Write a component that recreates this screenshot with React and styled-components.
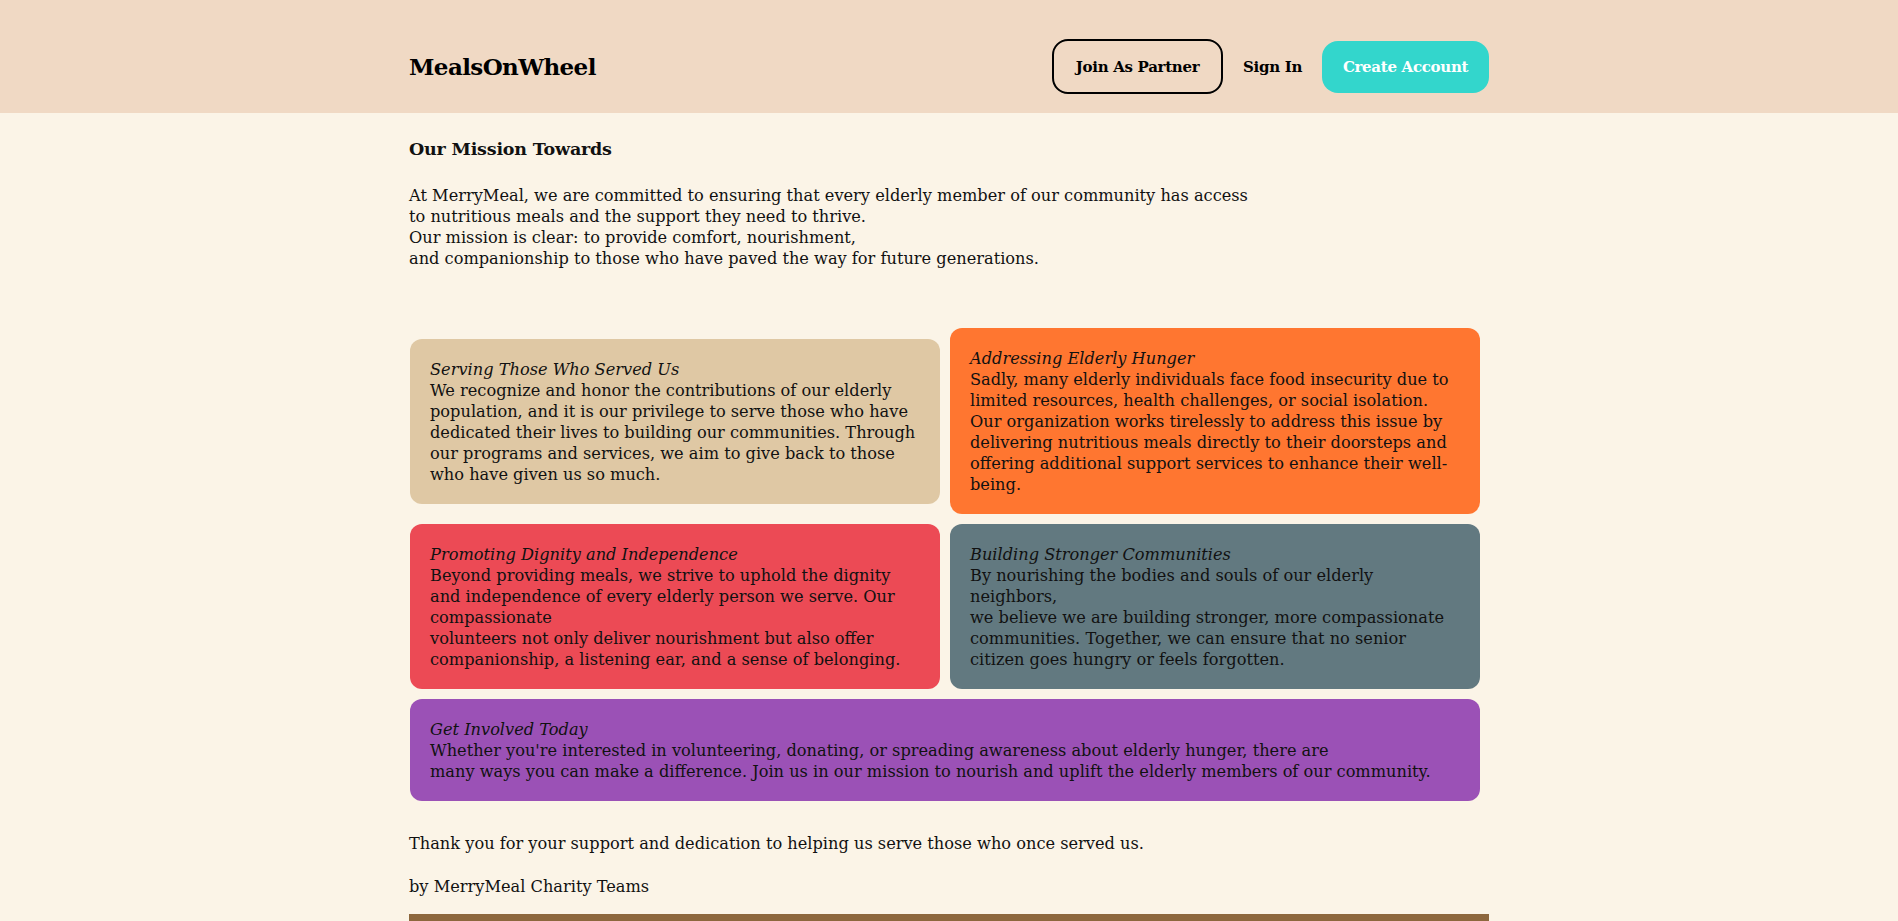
import React from 'react';
import styled, { createGlobalStyle } from 'styled-components';

const GlobalStyle = createGlobalStyle`
  html, body {
    margin: 0;
    padding: 0;
    background: #fbf4e7;
    color: #111111;
    font-family: "DejaVu Serif", "Liberation Serif", serif;
  }
  * { box-sizing: border-box; }
`;

const Header = styled.header`
  height: 113px;
  background: #f0d9c4;
  padding-top: 39px;
`;

const Bar = styled.div`
  max-width: 1080px;
  margin: 0 auto;
  display: flex;
  align-items: center;
  justify-content: space-between;
  height: 55px;
`;

const Logo = styled.div`
  font-size: 23px;
  font-weight: 700;
  letter-spacing: -0.6px;
  color: #000;
`;

const Nav = styled.nav`
  display: flex;
  align-items: center;
  gap: 20px;
`;

const NavButton = styled.button`
  font-family: inherit;
  font-size: 15px;
  font-weight: 700;
  letter-spacing: -0.3px;
  cursor: pointer;
  padding: 0;
  border-radius: 16px;
  border: ${p => (p.$outline ? '2px solid #000' : 'none')};
  background: ${p => (p.$primary ? '#33d6cc' : 'transparent')};
  color: ${p => (p.$primary ? '#ffffff' : '#000000')};
  height: ${p => (p.$outline ? '55px' : p.$primary ? '52px' : 'auto')};
  width: ${p => (p.$outline ? '171px' : p.$primary ? '167px' : 'auto')};
`;

const Main = styled.main`
  max-width: 1080px;
  margin: 0 auto;
  padding-top: 25px;
`;

const Title = styled.h2`
  margin: 0;
  font-size: 17.5px;
  line-height: 22px;
  font-weight: 700;
  letter-spacing: -0.2px;
`;

const Intro = styled.p`
  margin: 25px 0 0;
  font-size: 16.2px;
  line-height: 21px;
`;

const Grid = styled.section`
  margin: 59px 9px 0 1px;
  display: grid;
  grid-template-columns: 1fr 1fr;
  gap: 10px;
  align-items: center;
`;

const Card = styled.div`
  background: ${p => p.$bg};
  border-radius: 12px;
  padding: 20px 12px 19px 20px;
  font-size: 16.2px;
  line-height: 21px;
  white-space: nowrap;
  color: #111;
  grid-column: ${p => (p.$wide ? '1 / -1' : 'auto')};
  align-self: ${p => (p.$stretch ? 'stretch' : 'center')};
`;

const CardTitle = styled.em`
  display: block;
  font-style: italic;
`;

const Closing = styled.p`
  margin: ${p => p.$top} 0 0;
  font-size: 16.2px;
  line-height: 21px;
`;

const Footer = styled.footer`
  max-width: 1080px;
  margin: 17px auto 0;
  height: 40px;
  background: #8d673d;
`;

const cards = [
  {
    bg: '#dfc8a4',
    title: 'Serving Those Who Served Us',
    lines: [
      'We recognize and honor the contributions of our elderly',
      'population, and it is our privilege to serve those who have',
      'dedicated their lives to building our communities. Through',
      'our programs and services, we aim to give back to those',
      'who have given us so much.',
    ],
  },
  {
    bg: '#ff7630',
    title: 'Addressing Elderly Hunger',
    lines: [
      'Sadly, many elderly individuals face food insecurity due to',
      'limited resources, health challenges, or social isolation.',
      'Our organization works tirelessly to address this issue by',
      'delivering nutritious meals directly to their doorsteps and',
      'offering additional support services to enhance their well-',
      'being.',
    ],
  },
  {
    bg: '#ec4a55',
    stretch: true,
    title: 'Promoting Dignity and Independence',
    lines: [
      'Beyond providing meals, we strive to uphold the dignity',
      'and independence of every elderly person we serve. Our',
      'compassionate',
      'volunteers not only deliver nourishment but also offer',
      'companionship, a listening ear, and a sense of belonging.',
    ],
  },
  {
    bg: '#627980',
    stretch: true,
    title: 'Building Stronger Communities',
    lines: [
      'By nourishing the bodies and souls of our elderly',
      'neighbors,',
      'we believe we are building stronger, more compassionate',
      'communities. Together, we can ensure that no senior',
      'citizen goes hungry or feels forgotten.',
    ],
  },
  {
    bg: '#9b51b6',
    wide: true,
    title: 'Get Involved Today',
    lines: [
      "Whether you're interested in volunteering, donating, or spreading awareness about elderly hunger, there are",
      'many ways you can make a difference. Join us in our mission to nourish and uplift the elderly members of our community.',
    ],
  },
];

export default function App() {
  return (
    <>
      <GlobalStyle />
      <Header>
        <Bar>
          <Logo>MealsOnWheel</Logo>
          <Nav>
            <NavButton $outline>Join As Partner</NavButton>
            <NavButton>Sign In</NavButton>
            <NavButton $primary>Create Account</NavButton>
          </Nav>
        </Bar>
      </Header>
      <Main>
        <Title>Our Mission Towards</Title>
        <Intro>
          At MerryMeal, we are committed to ensuring that every elderly member of our community has access
          <br />
          to nutritious meals and the support they need to thrive.
          <br />
          Our mission is clear: to provide comfort, nourishment,
          <br />
          and companionship to those who have paved the way for future generations.
        </Intro>
        <Grid>
          {cards.map(c => (
            <Card key={c.title} $bg={c.bg} $wide={c.wide} $stretch={c.stretch}>
              <CardTitle>{c.title}</CardTitle>
              {c.lines.map((line, i) => (
                <React.Fragment key={i}>
                  {i > 0 && <br />}
                  {line}
                </React.Fragment>
              ))}
            </Card>
          ))}
        </Grid>
        <Closing $top="32px">Thank you for your support and dedication to helping us serve those who once served us.</Closing>
        <Closing $top="22px">by MerryMeal Charity Teams</Closing>
      </Main>
      <Footer />
    </>
  );
}
